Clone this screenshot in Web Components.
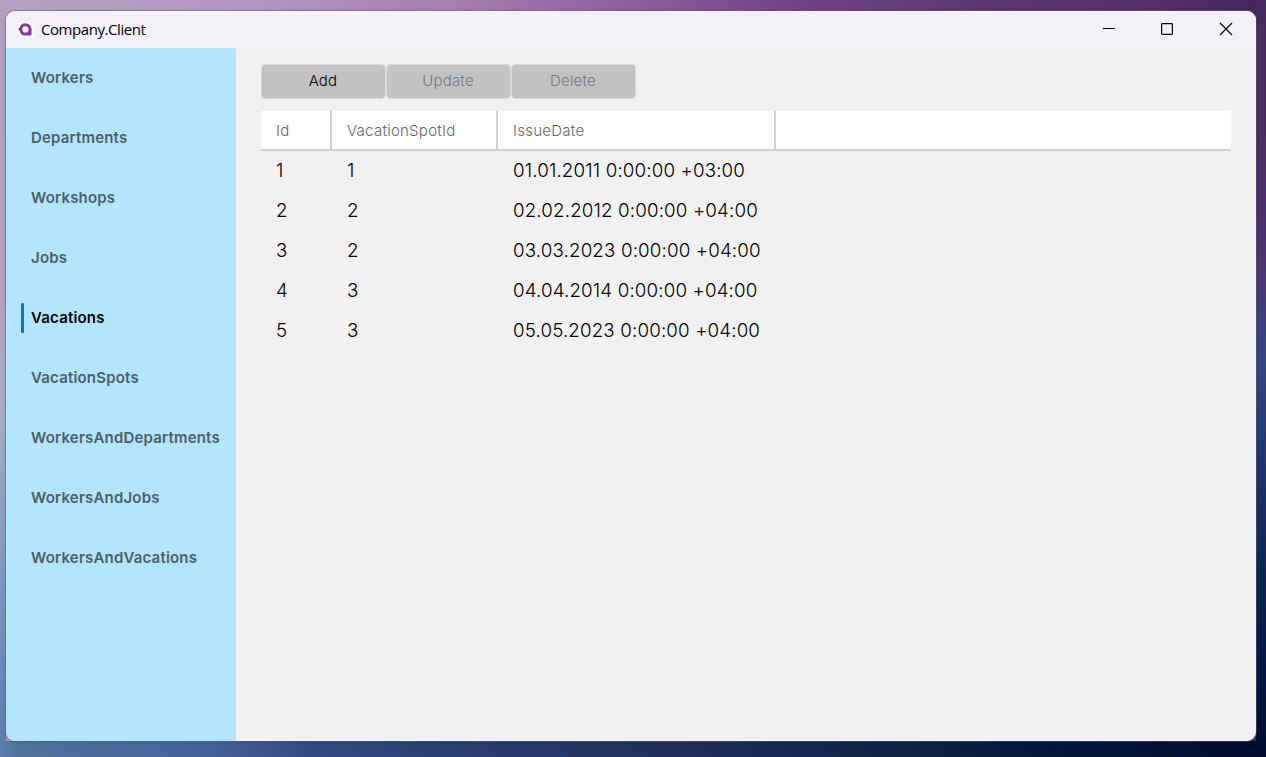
<!DOCTYPE html>
<html lang="en">
<head>
<meta charset="utf-8">
<title>Company.Client</title>
<style>
html, body { margin: 0; height: 100%; }
body { overflow: hidden; font-family: Inter, "Open Sans", sans-serif; }
</style>
</head>
<body>
<app-desktop>
  <app-window>
    <title-bar slot="title">Company.Client</title-bar>
    <side-nav slot="nav">
      <nav-item>Workers</nav-item>
      <nav-item>Departments</nav-item>
      <nav-item>Workshops</nav-item>
      <nav-item>Jobs</nav-item>
      <nav-item selected>Vacations</nav-item>
      <nav-item>VacationSpots</nav-item>
      <nav-item>WorkersAndDepartments</nav-item>
      <nav-item>WorkersAndJobs</nav-item>
      <nav-item>WorkersAndVacations</nav-item>
    </side-nav>
    <tool-bar>
      <tool-button>Add</tool-button>
      <tool-button disabled>Update</tool-button>
      <tool-button disabled>Delete</tool-button>
    </tool-bar>
    <data-grid></data-grid>
  </app-window>
</app-desktop>
<script>
function define(name, markup, setup) {
  customElements.define(name, class extends HTMLElement {
    constructor() {
      super();
      const t = document.createElement('template');
      t.innerHTML = markup;
      this.attachShadow({ mode: 'open' }).append(t.content.cloneNode(true));
      if (setup) setup(this.shadowRoot);
    }
  });
}

define('app-desktop', `<style>
:host { display: grid; box-sizing: border-box; width: 100vw; height: 100vh; padding: 11px 10px 16px 6px;
  background:
    linear-gradient(90deg, #5a7dae 0, #4f719a 1.5%, #45659a 16%, #2f4a80 25%, #26386a 42%, #1e2d5c 55%, #152850 63%, #0c2343 72%, #00173a 83%, #000d30 97%) bottom / 100% 16px no-repeat,
    linear-gradient(180deg, #472c5e 0, #4a2c60 18%, #4b3470 35%, #35457c 48%, #1c3263 65%, #061944 85%, #000d30 100%) right / 10px 100% no-repeat,
    linear-gradient(180deg, #b3a0c0 0, #b5a3bd 40%, #a9adc6 54%, #7f98c0 75%, #5a7dae 100%) left / 6px 100% no-repeat,
    linear-gradient(90deg, #b5a1c3 0, #b096be 20%, #a57fb0 36%, #8a5f9f 50%, #70458a 62%, #5b3573 78%, #532e68 92%, #43265a 100%); }
</style><slot></slot>`);

define('app-window', `<style>
:host { display: grid; grid-template: 37px 1fr / 230px 1fr; overflow: hidden; border-radius: 9px; background: #f1f1f1; box-shadow: 0 0 0 1px rgba(100,100,110,.5), 0 1px 4px rgba(0,0,0,.15); }
::slotted([slot=title]) { grid-column: 1 / 3; }
main { padding: 16px 25px; min-width: 0; }
</style><slot name="title"></slot><slot name="nav"></slot><main><slot></slot></main>`);

define('title-bar', `<style>
:host { display: flex; align-items: center; background: #f4f0f8; color: #000; font: 15px/20px "Open Sans", "Noto Sans", sans-serif; }
.logo { margin-left: 11px; flex: none; }
.name { margin-left: 7px; padding-bottom: 2px; flex: 1; letter-spacing: -.43px; }
.controls { display: flex; margin-right: -4px; }
.controls svg { display: block; }
</style>
<svg class="logo" width="17" height="17" viewBox="0 0 17 17"><path d="M8.5 0A8.5 8.5 0 0 0 8.5 17H15.5Q17 17 17 15.5V8.5A8.5 8.5 0 0 0 8.5 0Z" fill="#fff"/><path d="M8.4 2.2A6.2 6.2 0 0 0 2.6 6.6 1.8 1.8 0 0 0 2.6 10 6.2 6.2 0 0 0 8.4 14.6H13Q14.6 14.6 14.6 13V8.4A6.2 6.2 0 0 0 8.4 2.2Z" fill="#853aa5"/><circle cx="8.5" cy="8.4" r="3.1" fill="#fff"/><circle cx="2.7" cy="8.3" r=".8" fill="#693083"/></svg>
<span class="name"><slot></slot></span>
<span class="controls">
<svg width="58" height="37" viewBox="0 0 58 37"><path d="M21 17.5H33" stroke="#000"/></svg>
<svg width="58" height="37" viewBox="0 0 58 37"><rect x="21.6" y="12.6" width="10.8" height="10.8" rx=".8" fill="none" stroke="#000" stroke-width="1.2"/></svg>
<svg width="62" height="37" viewBox="0 0 62 37"><path d="M22 12L34 24M34 12L22 24" stroke="#000" stroke-width="1.2"/></svg>
</span>`);

define('side-nav', `<style>
:host { display: flex; flex-direction: column; background: #b3e5fc; }
</style><slot></slot>`);

define('nav-item', `<style>
:host { display: flex; align-items: center; height: 60px; padding-left: 15px; gap: 7px; font-size: 15px; font-weight: 600; letter-spacing: .19px; color: #4b6069; }
:host([selected]) { color: #000; }
i { width: 3px; height: 30px; border-radius: 1px; }
:host([selected]) i { background: #0078d7; }
span { padding-bottom: 2px; }
</style><i></i><span><slot></slot></span>`);

define('tool-bar', `<style>
:host { display: flex; gap: 0; }
</style><slot></slot>`);

define('tool-button', `<style>
:host { box-sizing: border-box; display: flex; justify-content: center; align-items: center; width: 125px; height: 35px; border: 1px solid #d9d9d9; border-radius: 4px; background: #c2c2c2; background-clip: padding-box; color: #000; font-size: 15px; font-weight: 300; letter-spacing: .2px; }
:host([disabled]) { color: #777; }
span { padding: 0 1px 3px 0; }
</style><span><slot></slot></span>`);

define('data-grid', `<style>
:host { display: grid; grid-template-columns: 71px 166px 278px 1fr; margin-top: 12px; font-weight: 300; }
.h { box-sizing: border-box; height: 40px; padding-left: 15px; background: linear-gradient(#d1d1d1, #d1d1d1) bottom / 100% 2px no-repeat #fff; border-right: 2px solid #d1d1d1; font-size: 15px; line-height: 40px; letter-spacing: .26px; color: #666; }
.h:nth-of-type(4) { border: 0; }
.c { height: 40px; padding-left: 15px; font-size: 18.75px; line-height: 40px; letter-spacing: .14px; color: #000; white-space: nowrap; }
</style>`, root => {
  const add = (cls, text) => {
    const d = document.createElement('div');
    d.className = cls;
    d.textContent = text;
    root.append(d);
  };
  ['Id', 'VacationSpotId', 'IssueDate', ''].forEach(t => add('h', t));
  [
    ['1', '1', '01.01.2011 0:00:00 +03:00', ''],
    ['2', '2', '02.02.2012 0:00:00 +04:00', ''],
    ['3', '2', '03.03.2023 0:00:00 +04:00', ''],
    ['4', '3', '04.04.2014 0:00:00 +04:00', ''],
    ['5', '3', '05.05.2023 0:00:00 +04:00', '']
  ].forEach(r => r.forEach(t => add('c', t)));
});
</script>
</body>
</html>
